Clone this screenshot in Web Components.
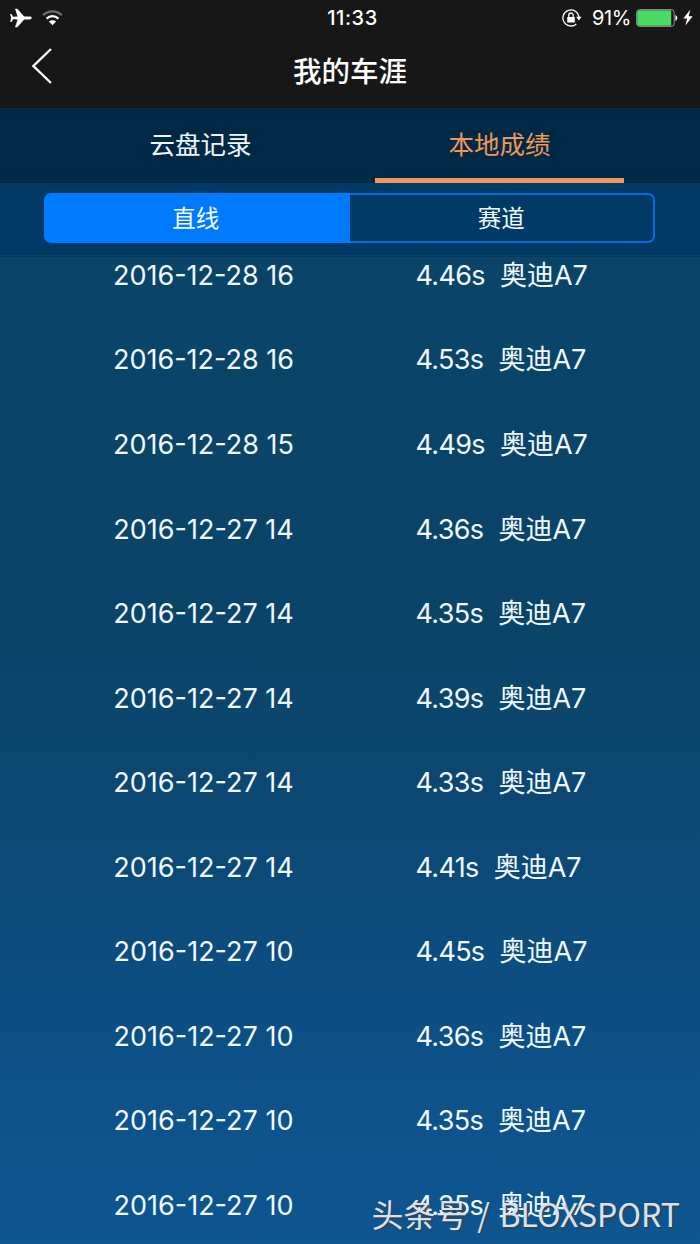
<!DOCTYPE html>
<html lang="zh-CN">
<head>
<meta charset="utf-8">
<title>我的车涯</title>
<style>
    html, body {
        margin: 0;
        height: 1244px;
        overflow: hidden;
        background: #0b4469;
    }
</style>
</head>
<body>
<career-app></career-app>

<script>
const makeTemplate = html => {
    const template = document.createElement('template');
    template.innerHTML = html;
    return template;
};

class BaseElement extends HTMLElement {
    constructor() {
        super();
        this._shadowRoot = this.attachShadow({ mode: 'open' });
        this._shadowRoot.appendChild(this.constructor.template.content.cloneNode(true));
    }
}

class StatusBar extends BaseElement {
    static template = makeTemplate(`
        <style>
            :host {
                display: grid;
                grid-template-columns: 1fr auto 1fr;
                align-items: center;
                height: 35px;
                padding: 0 7px 0 10px;
                box-sizing: border-box;
                font-size: 20px;
            }
            svg { display: block; }
            .left, .right { display: flex; align-items: center; }
            .left { gap: 10px; }
            .right { justify-content: flex-end; }
            .time { font-weight: 500; letter-spacing: 0.6px; padding-left: 2px; }
            .percent { margin: 0 5px 0 10px; letter-spacing: -0.4px; }
            .bolt { margin-left: 5px; }
        </style>
        <div class="left">
            <svg width="22" height="20" viewBox="0 0 22 20" fill="#fff">
                <path d="M21.7 10c0-.9-1-1.400-2.300-1.400h-5.200L7.300.8H5l2.600 7.800-4.400.2L1.400 6H.2l.9 4-.9 4h1.200l1.800-2.800 4.400.2L5 19.200h2.300l6.900-7.800h5.200c1.300 0 2.300-.5 2.300-1.400z"/>
            </svg>
            <svg width="21" height="17" viewBox="0 0 21 17" fill="none" stroke="#fff" stroke-width="2.2">
                <path stroke="#6b6b6b" d="M1.200 6.100C6.600 1 14.400 1 19.800 6.100"/>
                <path d="M4.600 9.600c3.500-3.300 8.300-3.300 11.800 0"/>
                <path fill="#fff" stroke="none" d="M10.500 16.200 6.900 12.600c2.100-1.900 5.100-1.900 7.200 0z"/>
            </svg>
        </div>
        <div class="time">11:33</div>
        <div class="right">
            <svg width="20" height="18" viewBox="0 0 20 18" fill="none" stroke="#fff" stroke-width="1.300">
                <path d="M16.900 8.200A8 8 0 1 0 14.300 14.900"/>
                <path fill="#fff" stroke="none" d="M14 7.800h5.600l-2.800 3.800zM5.200 8h7.600v5.600H5.200z"/>
                <path d="M6.800 8V6.200a2.200 2.200 0 0 1 4.400 0V8"/>
            </svg>
            <span class="percent">91%</span>
            <svg width="42" height="18" viewBox="0 0 42 18">
                <rect x=".6" y=".6" width="37.600" height="16.800" rx="3" fill="none" stroke="#939393"/>
                <path d="M3.200 1.200H35.200v15.600H3.200q-2 0-2-2V3.200q0-2 2-2z" fill="#4cd964"/>
                <path d="M39.400 6q2 1 2 3t-2 3z" fill="#fff"/>
            </svg>
            <svg class="bolt" width="10" height="17" viewBox="0 0 10 17" fill="#fff">
                <path d="M7.400.6.300 9.400h3.900L2.400 16.400 9.700 7.200H5.600z"/>
            </svg>
        </div>
    `);
}

class NavHeader extends BaseElement {
    static template = makeTemplate(`
        <style>
            :host {
                display: grid;
                grid-template-columns: 84px 1fr 84px;
                align-items: center;
                height: 73px;
            }
            svg { display: block; margin: -11px 0 0 31px; }
            h1 {
                margin: 0;
                font-size: 28.5px;
                font-weight: 500;
                line-height: 40px;
                text-align: center;
            }
        </style>
        <svg width="22" height="36" viewBox="0 0 22 36" fill="none" stroke="#fff" stroke-width="2.4">
            <path d="M20 1 2.400 18 20 35"/>
        </svg>
        <h1><slot></slot></h1>
    `);
}

class TabItem extends BaseElement {
    static template = makeTemplate(`
        <style>
            :host {
                display: flex;
                flex: 0 0 249px;
                justify-content: center;
                box-sizing: border-box;
                height: 74px;
                padding-top: 17px;
                font-size: 25.5px;
                line-height: 38px;
                border-bottom: 5px solid transparent;
            }
            :host([active]) {
                color: #f29657;
                border-color: #f29657;
            }
        </style>
        <slot></slot>
    `);
}

class TabBar extends BaseElement {
    static template = makeTemplate(`
        <style>
            :host {
                display: flex;
                justify-content: center;
                gap: 50px;
                background: #002945;
                border-top: 1px solid #072b43;
            }
        </style>
        <slot></slot>
    `);
}

class SegmentItem extends BaseElement {
    static template = makeTemplate(`
        <style>
            :host {
                flex: 1;
                display: block;
                box-sizing: border-box;
                text-align: center;
                font-size: 23.5px;
                line-height: 48px;
                border: 2px solid #0a6cdb;
                border-left: 0;
                border-radius: 0 7px 7px 0;
            }
            :host([active]) {
                background: #007aff;
                border-color: #007aff;
                border-radius: 7px 0 0 7px;
            }
        </style>
        <slot></slot>
    `);
}

class SegmentedControl extends BaseElement {
    static template = makeTemplate(`
        <style>
            :host {
                display: block;
                box-sizing: border-box;
                height: 73px;
                padding: 10px 45px 0 44px;
                background: linear-gradient(#003b66, #003965);
                border-bottom: 1px solid #0b4369;
            }
            .box {
                display: flex;
                height: 50px;
            }
        </style>
        <div class="box"><slot></slot></div>
    `);
}

class ResultRow extends BaseElement {
    static template = makeTemplate(`
        <style>
            :host {
                display: grid;
                grid-template-columns: 407px 1fr;
                align-items: center;
                height: 84.55px;
                font-size: 27px;
                line-height: 40px;
                white-space: pre;
            }
            .date { text-align: center; }
            .result { padding-left: 8.5px; }
            .time { letter-spacing: -0.7px; }
        </style>
        <div class="date"></div>
        <div class="result"><span class="time"></span>  <span class="car"></span></div>
    `);

    connectedCallback() {
        this._shadowRoot.querySelector('.date').textContent = this.getAttribute('date');
        this._shadowRoot.querySelector('.time').textContent = this.getAttribute('time') + 's';
        this._shadowRoot.querySelector('.car').textContent = this.getAttribute('car');
    }
}

class ResultList extends BaseElement {
    static template = makeTemplate(`
        <style>
            :host {
                display: block;
                height: 988px;
                overflow: hidden;
                border-top: 1px solid #06385b;
                box-sizing: border-box;
            }
            /* first row is scrolled partly under the segmented control */
            .rows { margin-top: -23.4px; }
        </style>
        <div class="rows"></div>
    `);

    connectedCallback() {
        const results = [
            ['2016-12-28 16', '4.46'],
            ['2016-12-28 16', '4.53'],
            ['2016-12-28 15', '4.49'],
            ['2016-12-27 14', '4.36'],
            ['2016-12-27 14', '4.35'],
            ['2016-12-27 14', '4.39'],
            ['2016-12-27 14', '4.33'],
            ['2016-12-27 14', '4.41'],
            ['2016-12-27 10', '4.45'],
            ['2016-12-27 10', '4.36'],
            ['2016-12-27 10', '4.35'],
            ['2016-12-27 10', '4.35']
        ];
        const $rows = this._shadowRoot.querySelector('.rows');
        results.forEach(([date, time]) => {
            const $row = document.createElement('result-row');
            $row.setAttribute('date', date);
            $row.setAttribute('time', time);
            $row.setAttribute('car', '奥迪A7');
            $rows.appendChild($row);
        });
    }
}

class WaterMark extends BaseElement {
    static template = makeTemplate(`
        <style>
            :host {
                position: absolute;
                right: 20px;
                bottom: 8px;
                font: 32px/46px "Noto Sans CJK SC", sans-serif;
                word-spacing: 2.5px;
                color: #d9e2f0;
                text-shadow: 1.5px 1.5px 1px #38424f;
                white-space: nowrap;
            }
        </style>
        <slot></slot>
    `);
}

class CareerApp extends BaseElement {
    static template = makeTemplate(`
        <style>
            :host {
                display: block;
                position: relative;
                width: 700px;
                height: 1244px;
                overflow: hidden;
                color: #fff;
                font-family: Inter, "Noto Sans CJK SC", sans-serif;
                background: linear-gradient(#0b4469 257px, #0b4469 640px, #0c4a79 900px, #0d528b 1100px, #0e5691);
            }
            .top { background: #171717; }
            tab-bar, segmented-control, result-list { color: #f0f9ff; }
        </style>
        <div class="top">
            <status-bar></status-bar>
            <nav-header>我的车涯</nav-header>
        </div>
        <tab-bar>
            <tab-item>云盘记录</tab-item>
            <tab-item active>本地成绩</tab-item>
        </tab-bar>
        <segmented-control>
            <segment-item active>直线</segment-item>
            <segment-item>赛道</segment-item>
        </segmented-control>
        <result-list></result-list>
        <water-mark>头条号 / BLOXSPORT</water-mark>
    `);
}

customElements.define('status-bar', StatusBar);
customElements.define('nav-header', NavHeader);
customElements.define('tab-item', TabItem);
customElements.define('tab-bar', TabBar);
customElements.define('segment-item', SegmentItem);
customElements.define('segmented-control', SegmentedControl);
customElements.define('result-row', ResultRow);
customElements.define('result-list', ResultList);
customElements.define('water-mark', WaterMark);
customElements.define('career-app', CareerApp);
</script>
</body>
</html>
